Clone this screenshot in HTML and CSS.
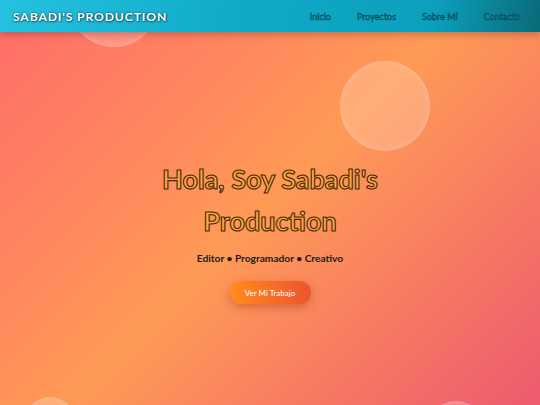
FILE: index.html
```html
<!DOCTYPE html>
<html lang="es">
<head>
<meta charset="utf-8">
<title>Sabadi's Production</title>
<link rel="stylesheet" href="styles.css">
</head>
<body>
<header class="topbar">
  <div class="logo">SABADI'S PRODUCTION</div>
  <nav class="nav">
    <a href="#" class="nav-link">Inicio</a>
    <a href="#" class="nav-link">Proyectos</a>
    <a href="#" class="nav-link">Sobre Mí</a>
    <a href="#" class="nav-link">Contacto</a>
  </nav>
</header>
<main class="hero">
  <span class="bubble bubble-a"></span>
  <span class="bubble bubble-b"></span>
  <span class="bubble bubble-c"></span>
  <span class="bubble bubble-d"></span>
  <div class="hero-content">
    <h1 class="hero-title">Hola, Soy Sabadi's<br>Production</h1>
    <p class="hero-sub">Editor • Programador • Creativo</p>
    <a href="#" class="btn">Ver Mi Trabajo</a>
  </div>
</main>
</body>
</html>
```

FILE: styles.css
```css
* { box-sizing: border-box; }
html, body { margin: 0; padding: 0; overflow: hidden; }
body {
  font-family: Lato, "Open Sans", sans-serif;
  width: 540px;
  height: 405px;
  position: relative;
  background: linear-gradient(135deg, #ff6b6b 0%, #ff9a56 50%, #ee5a6f 100%);
}
.topbar {
  position: relative;
  z-index: 5;
  height: 32px;
  display: flex;
  align-items: center;
  justify-content: space-between;
  padding: 0 20px 0 13px;
  background: linear-gradient(100deg, rgba(28,198,228,0.96) 0%, rgba(6,171,204,0.96) 45%, rgba(1,160,192,0.96) 80%, rgba(0,105,122,0.96) 100%);
  box-shadow: 0 2px 8px rgba(0,0,0,0.25);
}
.logo {
  color: #fff;
  font-weight: 700;
  font-size: 12.2px;
  letter-spacing: 0.85px;
  text-shadow: 0 0 2px rgba(0,40,60,0.9), 1px 1px 2px rgba(0,0,0,0.4);
}
.nav { display: flex; gap: 26px; }
.nav-link {
  color: #12a9c4;
  text-decoration: none;
  font-size: 9px;
  -webkit-text-stroke: 0.5px #07404c;
}
.hero {
  position: relative;
  height: 373px;
  overflow: hidden;
  display: flex;
  justify-content: center;
  padding-top: 126px;
}
.bubble {
  position: absolute;
  border-radius: 50%;
  background: rgba(255,255,255,0.2);
  box-shadow: inset 0 0 6px rgba(255,255,255,0.25);
}
.bubble-a { left: 68px; top: -77px; width: 92px; height: 92px; }
.bubble-b { left: 340px; top: 29px; width: 90px; height: 90px; }
.bubble-c { left: 25px; top: 365px; width: 50px; height: 50px; }
.bubble-d { left: 428px; top: 369px; width: 56px; height: 56px; }
.hero-content {
  position: relative;
  text-align: center;
  display: flex;
  flex-direction: column;
  align-items: center;
}
.hero-title {
  margin: 0;
  font-size: 27px;
  line-height: 42px;
  font-weight: 700;
  color: #f7a843;
  -webkit-text-stroke: 1.1px #4a2608;
}
.hero-sub {
  margin: 10px 0 0;
  font-size: 10.2px;
  font-weight: 700;
  color: #1e1a1a;
}
.btn {
  margin-top: 17px;
  width: 81px;
  height: 23px;
  border-radius: 12px;
  display: flex;
  align-items: center;
  justify-content: center;
  color: #fff;
  font-size: 8px;
  text-decoration: none;
  background: linear-gradient(90deg, #ff8c1c 0%, #f46a26 60%, #ec5430 100%);
  box-shadow: 0 3px 8px rgba(160,60,20,0.45);
}
```
